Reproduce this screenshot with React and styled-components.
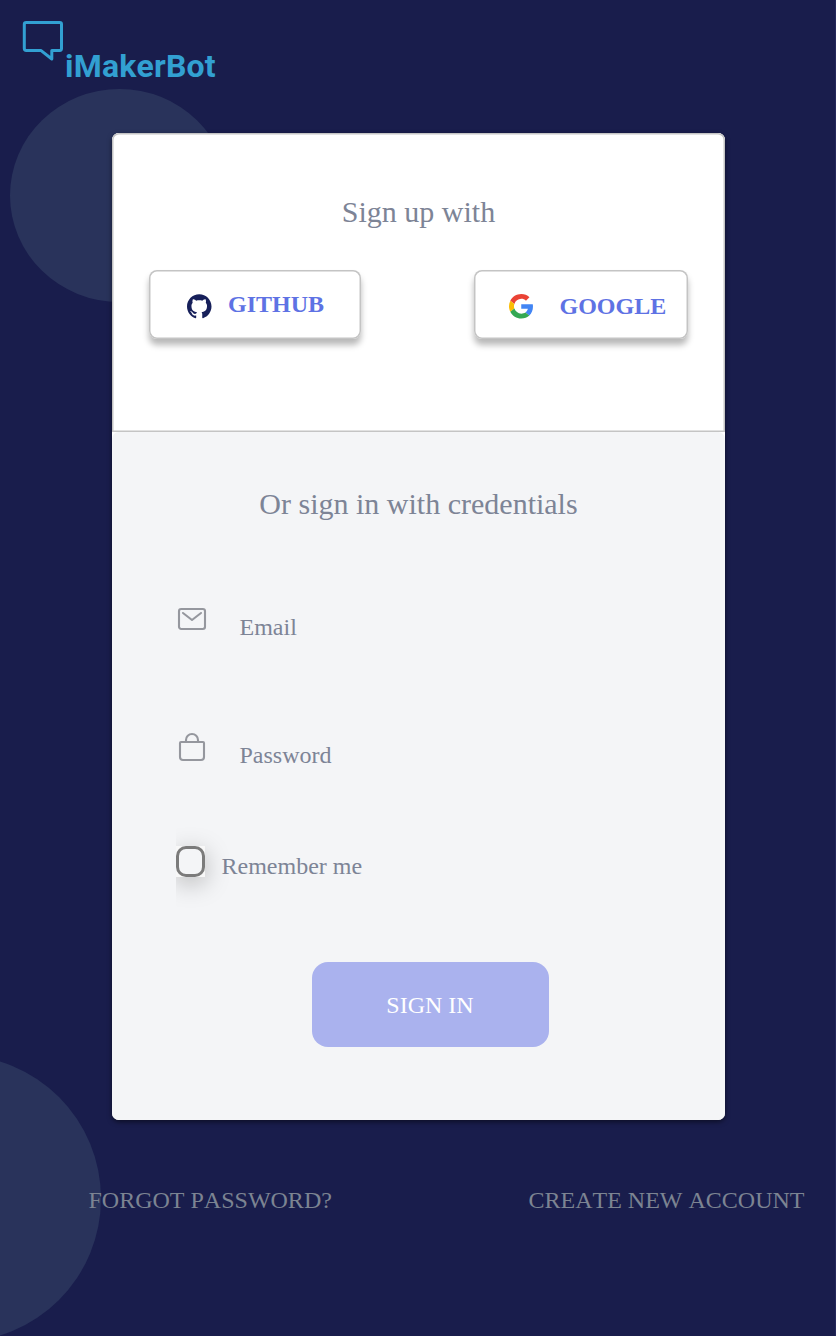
import React from "react";
import styled, { createGlobalStyle } from "styled-components";
import { SiGithub } from "react-icons/si";

const GlobalStyle = createGlobalStyle`
  * { box-sizing: border-box; }
  body { margin: 0; background: #191d4c; }
  button { border: 0; background: none; padding: 0; font: inherit; color: inherit; }
  a { color: inherit; text-decoration: none; }
`;

const Page = styled.div`
  position: relative;
  width: 836px;
  height: 1336px;
  overflow: hidden;
  background: #191d4c;
  box-shadow: inset -1px 0 #24275a;
  font-family: "Liberation Serif", "Times New Roman", serif;
  font-size: 24px;
  font-kerning: none;
  line-height: 28px;
  color: #7d8496;
`;

const Circle = styled.div`
  position: absolute;
  left: ${(p) => p.$x}px;
  top: ${(p) => p.$y}px;
  width: ${(p) => p.$w}px;
  height: ${(p) => p.$h}px;
  border-radius: 50%;
  background: #29335b;
`;

const Header = styled.header`
  position: relative;
  display: flex;
  height: 132.5px;
  padding: 20px 0 0 22px;
  color: #32a0d2;
`;

const Brand = styled.span`
  margin: 28px 0 0 1px;
  height: 36px;
  font: 700 32px/36px Roboto, sans-serif;
  font-kerning: none;
  letter-spacing: 0.2px;
`;

const Card = styled.main`
  position: relative;
  width: 613px;
  height: 987.5px;
  margin-left: 112px;
  border-radius: 7px;
  background: #fff;
  box-shadow: 0 2px 5px rgba(0, 0, 0, 0.5);
`;

const SocialPanel = styled.section`
  height: 299.5px;
  padding: 62.5px 37px 0;
  border-radius: 7px 7px 0 0;
  background: #fff;
  box-shadow: inset 0 0 0 1.5px #c4c4c4;
`;

const Title = styled.h2`
  margin: 0;
  font-size: 30px;
  font-weight: 400;
  line-height: 34px;
  text-align: center;
`;

const SocialRow = styled.div`
  display: flex;
  justify-content: space-between;
  margin-top: 41px;
`;

const SocialButton = styled.button`
  display: flex;
  align-items: flex-start;
  width: ${(p) => p.$width}px;
  height: 69px;
  padding: 24px 0 0 ${(p) => p.$inset}px;
  gap: ${(p) => p.$gap}px;
  border-radius: 8px;
  background: #fff;
  box-shadow: inset 0 0 0 1.5px #c4c4c4, 0 6px 6px rgba(0, 0, 0, 0.28);
  color: #5e72e4;
  font-weight: 700;
`;

const SocialLabel = styled.span`
  margin-top: ${(p) => p.$drop}px;
`;

const Credentials = styled.form`
  height: 688px;
  padding: 55px 64px 0;
  border-radius: 7px;
  background: #f4f5f7;
`;

const Field = styled.label`
  display: flex;
  height: 28px;
  margin-top: ${(p) => p.$top}px;
  gap: 31.5px;
`;

const FieldIcon = styled.svg`
  width: 32px;
  height: 32px;
  margin-top: -10px;
  fill: none;
  stroke: #95979e;
  stroke-width: 2.1;
  stroke-linejoin: round;
  stroke-linecap: round;
`;

const Remember = styled.label`
  display: flex;
  gap: 16.5px;
  height: 31px;
  margin-top: 77px;
`;

const CheckFrame = styled.span`
  width: 29px;
  height: 31px;
  background: #f8f8f8;
  box-shadow: 0 6px 24px rgba(0, 0, 0, 0.25);
  clip-path: inset(-30px -36px -40px 0);
`;

const CheckBox = styled.span`
  display: block;
  width: 29px;
  height: 31px;
  border: 3px solid #7b7b7b;
  border-radius: 10px;
  background: #f4f5f7;
`;

const RememberText = styled.span`
  margin-top: 6px;
`;

const SubmitButton = styled.button`
  display: block;
  width: 237px;
  height: 85px;
  margin: 84.5px 0 0 136px;
  padding: 2px 1px 0 0;
  border-radius: 16px;
  background: #aab2ee;
  color: #fff;
  text-align: center;
`;

const Footer = styled.footer`
  position: relative;
  display: flex;
  justify-content: space-between;
  padding: 66px 31.5px 0 88.5px;
  color: #7c8492;
`;

function LogoMark() {
  return (
    <svg width="42" height="42" viewBox="0 0 42 42" fill="none" stroke="currentColor" strokeWidth="3" strokeLinejoin="round">
      <path d="M4.3 2.5H37.7Q39.5 2.5 39.5 4.3V28.5Q39.5 30.4 37.7 30.4H29.8V39L18.8 30.4H4.3Q2.3 30.4 2.3 28.5V4.3Q2.3 2.5 4.3 2.5Z" />
    </svg>
  );
}

function GoogleMark() {
  return (
    <svg width="24.5" height="24.5" viewBox="0 0 48 48">
      <path fill="#EA4335" d="M24 9.5c3.54 0 6.71 1.22 9.21 3.6l6.85-6.85C35.9 2.38 30.47 0 24 0 14.62 0 6.51 5.38 2.56 13.22l7.98 6.19C12.43 13.72 17.74 9.5 24 9.5z" />
      <path fill="#4285F4" d="M46.98 24.55c0-1.57-.15-3.09-.38-4.55H24v9.02h12.94c-.58 2.96-2.26 5.48-4.78 7.18l7.73 6c4.51-4.18 7.09-10.36 7.09-17.65z" />
      <path fill="#FBBC05" d="M10.53 28.59c-.48-1.45-.76-2.99-.76-4.59s.27-3.14.76-4.59l-7.98-6.19C.92 16.46 0 20.12 0 24c0 3.88.92 7.54 2.56 10.78l7.97-6.19z" />
      <path fill="#34A853" d="M24 48c6.48 0 11.93-2.13 15.89-5.81l-7.73-6c-2.15 1.45-4.92 2.3-8.16 2.3-6.26 0-11.57-4.22-13.47-9.91l-7.98 6.19C6.51 42.62 14.62 48 24 48z" />
    </svg>
  );
}

export default function App() {
  return (
    <Page>
      <GlobalStyle />
      <Circle $x={9.5} $y={89} $w={219} $h={213} />
      <Circle $x={-186} $y={1055} $w={287} $h={287} />
      <Header>
        <LogoMark />
        <Brand>iMakerBot</Brand>
      </Header>
      <Card>
        <SocialPanel>
          <Title>Sign up with</Title>
          <SocialRow>
            <SocialButton $width={212} $inset={38} $gap={16.5}>
              <SiGithub size={24.5} color="#17205a" />
              <SocialLabel $drop={-4}>GITHUB</SocialLabel>
            </SocialButton>
            <SocialButton $width={214} $inset={34.5} $gap={26.5}>
              <GoogleMark />
              <SocialLabel $drop={-2}>GOOGLE</SocialLabel>
            </SocialButton>
          </SocialRow>
        </SocialPanel>
        <Credentials>
          <Title>Or sign in with credentials</Title>
          <Field $top={92}>
            <FieldIcon viewBox="0 0 32 32">
              <rect x="3" y="6" width="26" height="20" rx="2.2" />
              <path d="M7 10L16 17L25 10" />
            </FieldIcon>
            Email
          </Field>
          <Field $top={100}>
            <FieldIcon viewBox="0 0 32 32">
              <path d="M5 11H27Q28 11 28 12V26Q28 29 25 29H7Q4 29 4 26V12Q4 11 5 11Z" />
              <path d="M10 11V9A6 6 0 0 1 22 9V11" />
            </FieldIcon>
            Password
          </Field>
          <Remember>
            <CheckFrame>
              <CheckBox />
            </CheckFrame>
            <RememberText>Remember me</RememberText>
          </Remember>
          <SubmitButton type="button">SIGN IN</SubmitButton>
        </Credentials>
      </Card>
      <Footer>
        <a href="#forgot">FORGOT PASSWORD?</a>
        <a href="#create">CREATE NEW ACCOUNT</a>
      </Footer>
    </Page>
  );
}
